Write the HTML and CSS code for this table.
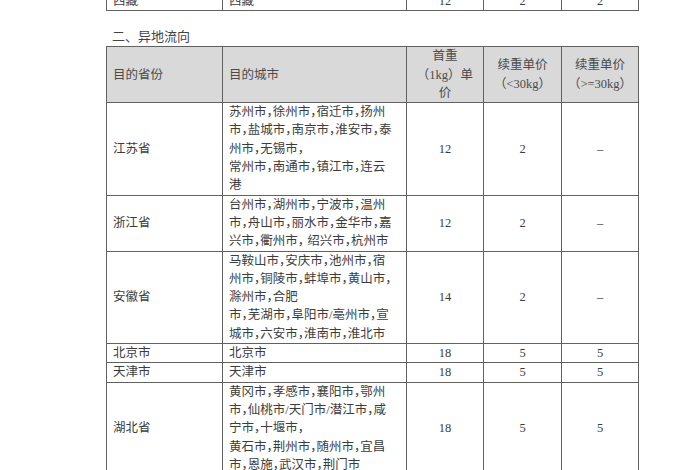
FILE: index.html
```html
<!DOCTYPE html>
<html lang="zh-CN">
<head>
<meta charset="utf-8">
<title>异地流向</title>
<link rel="stylesheet" href="styles.css">
</head>
<body>
<div class="page">
  <table class="grid top">
    <colgroup>
      <col class="c-prov"><col class="c-city"><col class="c-num"><col class="c-num2"><col class="c-num">
    </colgroup>
    <tr>
      <td>西藏</td>
      <td>西藏</td>
      <td class="num">12</td>
      <td class="num">2</td>
      <td class="num">2</td>
    </tr>
  </table>

  <h2 class="section">二、异地流向</h2>

  <table class="grid">
    <colgroup>
      <col class="c-prov"><col class="c-city"><col class="c-num"><col class="c-num2"><col class="c-num">
    </colgroup>
    <tr class="head">
      <th class="left">目的省份</th>
      <th class="left">目的城市</th>
      <th>首重<br>（1kg）单<br>价</th>
      <th>续重单价<br>（&lt;30kg）</th>
      <th>续重单价<br>（&gt;=30kg）</th>
    </tr>
    <tr>
      <td>江苏省</td>
      <td class="cities">苏州市，徐州市，宿迁市，扬州<br>市，盐城市，南京市，淮安市，泰<br>州市，无锡市，<br>常州市，南通市，镇江市，连云<br>港</td>
      <td class="num">12</td>
      <td class="num">2</td>
      <td class="num">–</td>
    </tr>
    <tr>
      <td>浙江省</td>
      <td class="cities">台州市，湖州市，宁波市，温州<br>市，舟山市，丽水市，金华市，嘉<br>兴市，衢州市， 绍兴市，杭州市</td>
      <td class="num">12</td>
      <td class="num">2</td>
      <td class="num">–</td>
    </tr>
    <tr>
      <td>安徽省</td>
      <td class="cities">马鞍山市，安庆市，池州市，宿<br>州市，铜陵市，蚌埠市，黄山市，<br>滁州市，合肥<br>市，芜湖市，阜阳市/亳州市，宣<br>城市，六安市，淮南市，淮北市</td>
      <td class="num">14</td>
      <td class="num">2</td>
      <td class="num">–</td>
    </tr>
    <tr>
      <td>北京市</td>
      <td class="cities">北京市</td>
      <td class="num">18</td>
      <td class="num">5</td>
      <td class="num">5</td>
    </tr>
    <tr>
      <td>天津市</td>
      <td class="cities">天津市</td>
      <td class="num">18</td>
      <td class="num">5</td>
      <td class="num">5</td>
    </tr>
    <tr>
      <td>湖北省</td>
      <td class="cities">黄冈市，孝感市，襄阳市，鄂州<br>市，仙桃市/天门市/潜江市，咸<br>宁市，十堰市，<br>黄石市，荆州市，随州市，宜昌<br>市，恩施，武汉市，荆门市</td>
      <td class="num">18</td>
      <td class="num">5</td>
      <td class="num">5</td>
    </tr>
  </table>
</div>
</body>
</html>
```

FILE: styles.css
```css
html, body {
  margin: 0;
  padding: 0;
  background: #ffffff;
}

body {
  overflow: hidden;
}

.page {
  padding-left: 106px;
  width: 533px;
}

.grid {
  border-collapse: collapse;
  table-layout: fixed;
  width: 532px;
  font-family: "Liberation Serif", "Noto Sans CJK SC", serif;
  font-size: 12.5px;
  line-height: 18.3px;
  color: #3c3c3c;
}

.c-prov { width: 116px; }
.c-city { width: 184px; }
.c-num { width: 77px; }
.c-num2 { width: 78px; }

.grid td,
.grid th {
  border: 1px solid #616161;
  padding: 0 6px;
  vertical-align: middle;
  text-align: left;
}

.grid .num,
.grid th {
  text-align: center;
}

.grid th.left {
  text-align: left;
}

.head th {
  background: #d9d9d9;
  font-weight: normal;
  color: #4a4a4a;
}

.cities {
  white-space: nowrap;
  font-feature-settings: "halt";
}

.top {
  margin-top: -9px;
}

.section {
  margin: 17px 0 0;
  padding-left: 6px;
  font-family: "Liberation Serif", "Noto Sans CJK SC", serif;
  font-size: 13px;
  line-height: 18px;
  font-weight: normal;
  color: #444444;
}
```
